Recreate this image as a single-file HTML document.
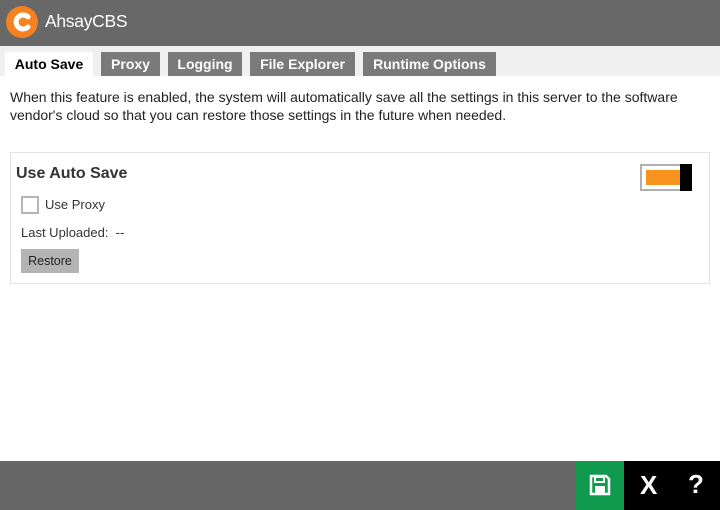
<!DOCTYPE html>
<html><head><meta charset="utf-8"><style>
*{margin:0;padding:0;box-sizing:border-box}
body{width:720px;height:510px;position:relative;background:#fff;font-family:"Liberation Sans",Arial,sans-serif;overflow:hidden}
.hdr{position:absolute;left:0;top:0;width:720px;height:46px;background:#686868}
.title{position:absolute;left:45px;top:11px;color:#fff;font-size:17.5px;letter-spacing:-0.3px}
.tabbar{position:absolute;left:0;top:46px;width:720px;height:30px;background:#f0f0f0}
.tab{position:absolute;top:6px;height:24px;background:#7a7a7a;color:#fff;font-weight:bold;font-size:14px;line-height:24px;text-align:center}
.tab.act{background:#fff;color:#000}
.desc{position:absolute;left:10px;top:88px;width:690px;font-size:14px;line-height:18px;color:#222}
.panel{position:absolute;left:10px;top:152px;width:700px;height:132px;border:1px solid #e2e2e2}
.h{position:absolute;left:16px;top:165px;font-size:16px;font-weight:bold;color:#333}
.cb{position:absolute;left:21px;top:196px;width:18px;height:18px;border:2px solid #b5b5b5;background:#fff}
.lbl{position:absolute;font-size:13px;color:#333}
.btn{position:absolute;left:21px;top:249px;width:58px;height:24px;background:#b4b4b4;font-size:12.5px;line-height:25px;text-align:center;color:#222}
.tg{position:absolute;left:640px;top:164px;width:42px;height:27px;border:2px solid #b0b0b0;background:#fff}
.tg i{position:absolute;left:4px;top:4px;width:34px;height:15px;background:#f7931e}
.tgk{position:absolute;left:680px;top:164px;width:12px;height:27px;background:#000}
.ftr{position:absolute;left:0;top:461px;width:720px;height:49px;background:#666}
.save{position:absolute;left:576px;top:461px;width:48px;height:49px;background:#0f9a4e}
.blk{position:absolute;left:624px;top:461px;width:96px;height:49px;background:#000;color:#fff;font-weight:bold;font-size:26px}
</style></head><body>
<div class="hdr">
<svg style="position:absolute;left:6px;top:6px" width="32" height="32" viewBox="0 0 32 32"><circle cx="16" cy="16" r="16" fill="#f58220"/><path d="M22 11 A7 7 0 1 0 22 21" fill="none" stroke="#fff" stroke-width="5" stroke-linecap="round"/></svg>
<div class="title">AhsayCBS</div></div>
<div class="tabbar">
<div class="tab act" style="left:5px;width:88px">Auto Save</div>
<div class="tab" style="left:101px;width:59px">Proxy</div>
<div class="tab" style="left:168px;width:74px">Logging</div>
<div class="tab" style="left:250px;width:105px">File Explorer</div>
<div class="tab" style="left:363px;width:133px">Runtime Options</div>
</div>
<div class="desc">When this feature is enabled, the system will automatically save all the settings in this server to the software vendor's cloud so that you can restore those settings in the future when needed.</div>
<div class="panel"></div>
<div class="h">Use Auto Save</div>
<div class="cb"></div>
<div class="lbl" style="left:45px;top:197px">Use Proxy</div>
<div class="lbl" style="left:21px;top:225px">Last Uploaded:&nbsp; --</div>
<div class="btn">Restore</div>
<div class="tg"><i></i></div><div class="tgk"></div>
<div class="ftr"></div>
<div class="save"><svg style="position:absolute;left:13px;top:13px" width="22" height="22" viewBox="0 0 22 22"><path d="M2 2H17L20 5V20H2Z" fill="none" stroke="#fff" stroke-width="2.5"/><rect x="6" y="3" width="9" height="5" fill="none" stroke="#fff" stroke-width="2"/><rect x="6" y="12" width="10" height="7" fill="#fff"/></svg></div>
<div class="blk"><span style="position:absolute;left:16px;top:9px">X</span><span style="position:absolute;left:64px;top:8px">?</span></div>
</body></html>
